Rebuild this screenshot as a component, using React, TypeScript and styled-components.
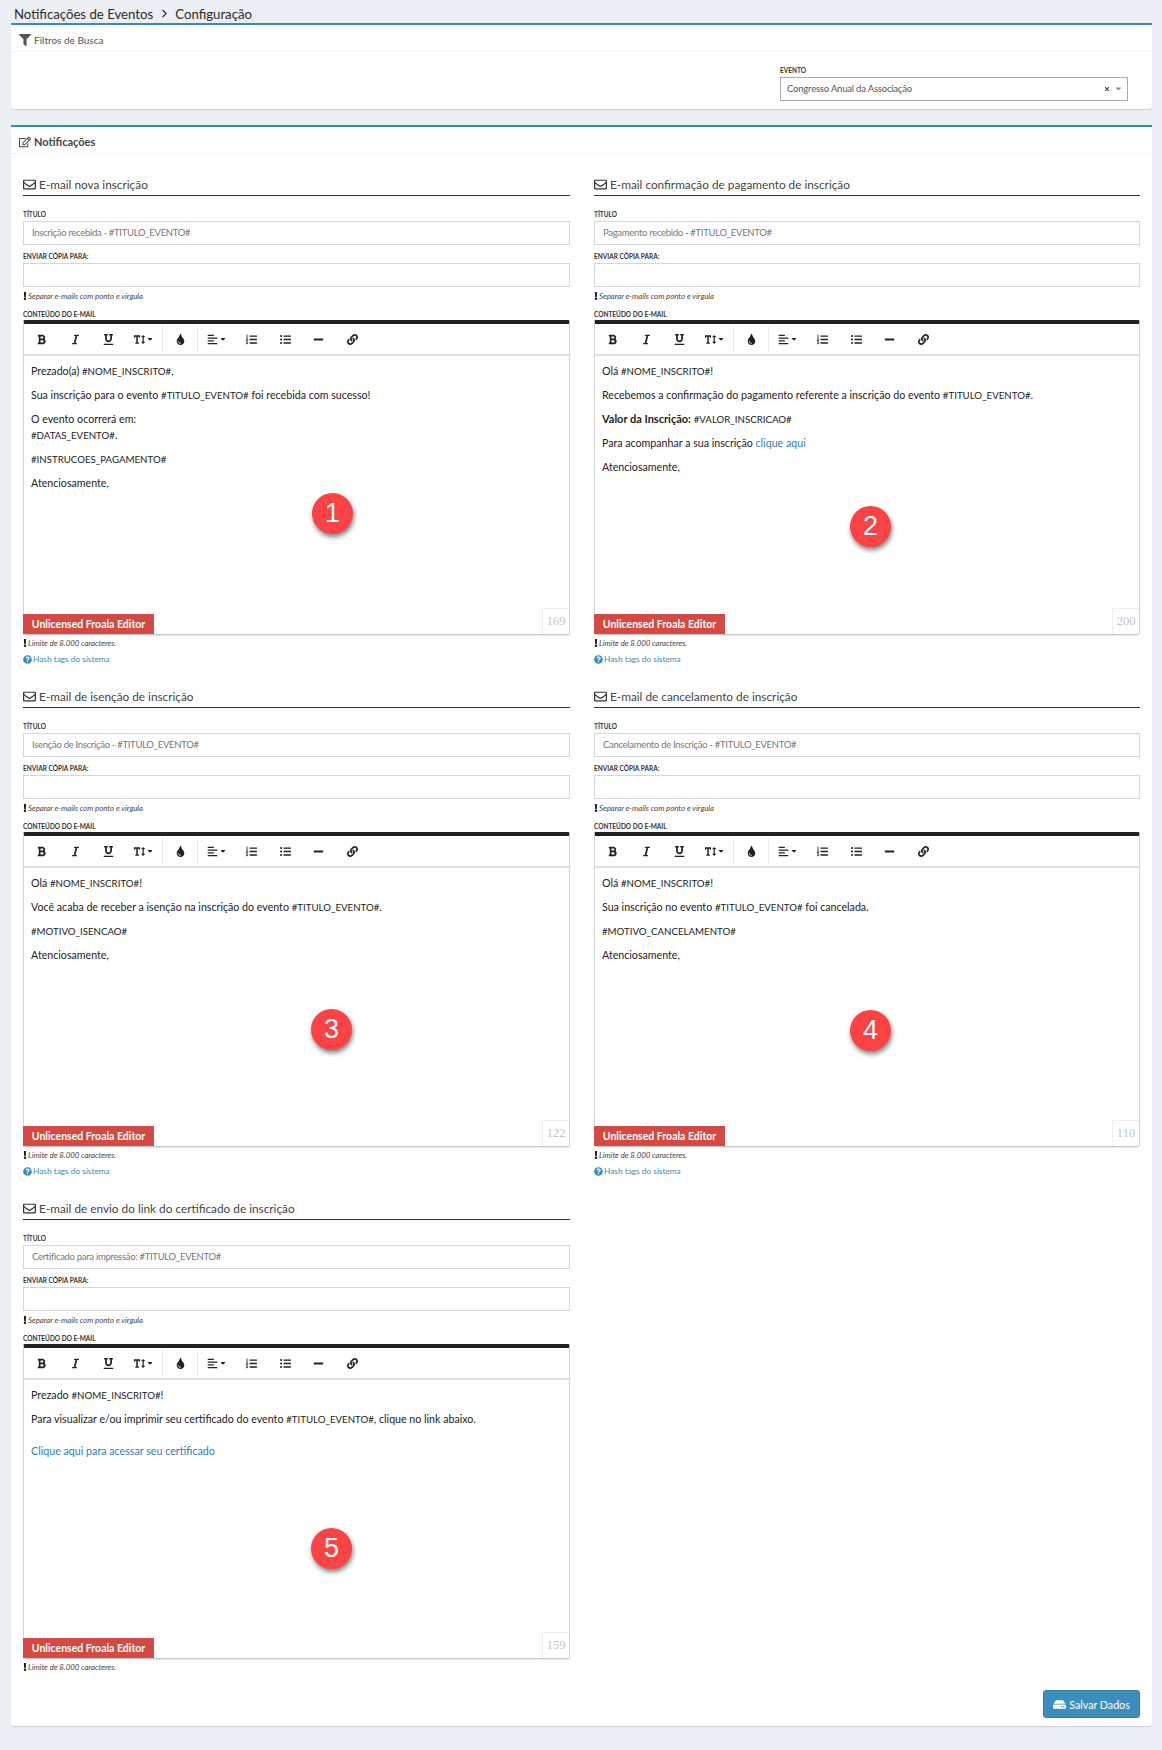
import React from 'react';
import styled, { createGlobalStyle } from 'styled-components';
import { ChevronRight } from 'lucide-react';
import {
  FaAlignLeft,
  FaBold,
  FaExclamation,
  FaFilter,
  FaHdd,
  FaItalic,
  FaLink,
  FaListOl,
  FaListUl,
  FaMinus,
  FaQuestionCircle,
  FaRegEdit,
  FaRegEnvelope,
  FaTextHeight,
  FaTint,
  FaUnderline,
  FaCaretDown,
  FaTimes,
} from 'react-icons/fa';

const GlobalStyle = createGlobalStyle`
  html, body {
    margin: 0;
    padding: 0;
    background: #ebeef3;
    font-family: Lato, "Noto Sans", sans-serif;
    color: #333;
  }
  * { box-sizing: border-box; }
`;

const Page = styled.div`
  width: 1162px;
  height: 1750px;
  padding: 0 10px 0 11px;
  overflow: hidden;
`;

const Breadcrumb = styled.div`
  display: flex;
  align-items: center;
  height: 23px;
  padding: 4px 0 0 3px;
  font-size: 13.2px;
  color: #2b2b2b;
  svg { margin: 0 4px 0 5px; }
`;

const Panel = styled.section`
  background: #fff;
  border-top: 2px solid #3c89bb;
  border-radius: 0 0 3px 3px;
  box-shadow: 0 1px 1px rgba(0, 0, 0, 0.14);
  margin-bottom: 16px;
`;

const PanelHeader = styled.header<{ $bold?: boolean }>`
  display: flex;
  align-items: center;
  gap: 3px;
  height: 27px;
  padding: 3px 0 0 8px;
  border-bottom: 1px solid #f2f2f2;
  font-size: ${({ $bold }) => ($bold ? '11px' : '10px')};
  font-weight: ${({ $bold }) => ($bold ? 700 : 400)};
  color: ${({ $bold }) => ($bold ? '#444' : '#555')};
  svg { font-size: 12px; }
`;

const FilterBody = styled.div`
  display: flex;
  justify-content: flex-end;
  height: 57px;
  padding: 13px 24px 0 0;
`;

const SelectField = styled.div`
  width: 348px;
`;

const SelectBox = styled.div`
  display: flex;
  align-items: center;
  height: 24px;
  padding: 0 4px 1px 6px;
  margin-top: 2px;
  border: 1px solid #aaa;
  font-size: 9.5px;
  letter-spacing: -0.2px;
  color: #555;
  span { flex: 1; }
  svg { color: #888; }
`;

const ClearIcon = styled(FaTimes)`
  font-size: 6px;
  margin-right: 4px;
  && { color: #444; }
`;

const PanelBody = styled.div`
  padding: 21px 12px 8px;
`;

const Grid = styled.div`
  display: grid;
  grid-template-columns: 547px 546px;
  column-gap: 24px;
  row-gap: 21.2px;
`;

const Notice = styled.div`
  min-width: 0;
`;

const NoticeTitle = styled.h3`
  display: flex;
  align-items: center;
  gap: 3px;
  height: 21px;
  margin: 0 0 13px;
  border-bottom: 1px solid #333;
  font-size: 11.8px;
  font-weight: 400;
  color: #444;
  padding-bottom: 1px;
  svg { font-size: 13px; color: #333; }
`;

const Field = styled.div`
  margin-bottom: 6px;
`;

const Label = styled.label`
  display: block;
  height: 10px;
  font-size: 6.5px;
  line-height: 12px;
  font-weight: 700;
  color: #333;
  text-transform: uppercase;
`;

const TextInput = styled.input`
  display: block;
  width: 100%;
  height: 24px;
  padding: 0 8px 2px;
  margin-top: 2px;
  border: 1px solid #d2d6de;
  outline: none;
  font: 9.5px Lato, "Noto Sans", sans-serif;
  letter-spacing: -0.3px;
  color: #777;
`;

const Hint = styled.div`
  display: flex;
  align-items: center;
  height: 12px;
  margin-top: 3px;
  font-size: 7.8px;
  font-style: italic;
  color: #444;
  svg { font-size: 8px; width: 4px; color: #222; margin-right: 1px; }
`;

const ContentLabel = styled(Label)`
  margin-top: 7px;
  margin-bottom: 1px;
`;

const Editor = styled.div`
  position: relative;
  height: 314px;
  border-top: 4px solid #222;
  border-left: 1px solid #d4d4d4;
  border-right: 1px solid #d4d4d4;
  border-radius: 2px 2px 0 0;
  box-shadow: 0 2px 2px -1px rgba(0, 0, 0, 0.3);
  display: flex;
  flex-direction: column;
`;

const Toolbar = styled.div`
  display: flex;
  align-items: center;
  flex: 0 0 32px;
  padding-left: 1px;
  border-bottom: 2px solid #e2e2e2;
`;

const ToolButton = styled.span<{ $wide?: boolean }>`
  display: flex;
  align-items: center;
  justify-content: center;
  width: ${({ $wide }) => ($wide ? '36px' : '33.5px')};
  height: 100%;
  font-size: 11px;
  color: #222;
`;

const Caret = styled(FaCaretDown)`
  font-size: 8px;
  margin-left: 1px;
`;

const ToolSeparator = styled.span`
  width: 1px;
  height: 26px;
  background: #ebebeb;
  margin-right: 1px;
`;

const Content = styled.div`
  flex: 1;
  padding: 7px 7px 0;
  font-size: 10.65px;
  line-height: 15.5px;
  color: #222;
  p { margin: 0 0 8.5px; }
  a { color: #337ab7; text-decoration: none; font-size: 10.7px; line-height: 0; }
  strong { font-weight: 700; font-size: 11px; line-height: 0; }
`;

const HashTag = styled.span`
  font-size: 9.7px;
  line-height: 0;
`;

const LinkParagraph = styled.p`
  && { margin-top: 16.5px; }
`;

const LicenseTag = styled.div`
  position: absolute;
  left: -1px;
  bottom: 0;
  width: 131px;
  height: 20px;
  background: #d24a43;
  color: #fff;
  font-size: 10.5px;
  font-weight: 700;
  line-height: 20px;
  text-align: center;
`;

const Counter = styled.div`
  position: absolute;
  right: 0;
  bottom: 0;
  width: 27px;
  height: 26px;
  padding-top: 5px;
  border-left: 1px solid #eee;
  border-top: 1px solid #eee;
  font: 12.5px "Liberation Serif", serif;
  color: #c4c4c4;
  text-align: center;
`;

const Marker = styled.div<{ $x: number; $y: number }>`
  position: absolute;
  left: ${({ $x }) => $x}px;
  top: ${({ $y }) => $y}px;
  width: 41px;
  height: 41px;
  border-radius: 50%;
  background: #fb4245;
  box-shadow: 1px 3px 5px rgba(0, 0, 0, 0.5);
  color: #fff;
  font: 27px/41px "Liberation Sans", sans-serif;
  text-align: center;
`;

const HashLink = styled.a`
  display: flex;
  align-items: center;
  gap: 1px;
  height: 14px;
  margin-top: 3px;
  font-size: 8.3px;
  color: #3c89bb;
  svg { font-size: 9px; }
`;

const Footer = styled.div`
  display: flex;
  justify-content: flex-end;
  margin-top: 17px;
`;

const SaveButton = styled.button`
  display: flex;
  align-items: center;
  justify-content: center;
  gap: 3px;
  width: 97px;
  height: 28px;
  padding: 0;
  background: #3c8dbc;
  border: 1px solid #367fa9;
  border-radius: 3px;
  color: #fff;
  font: 10.7px Lato, "Noto Sans", sans-serif;
  svg { font-size: 13px; }
`;

const tagged = (text: string) =>
  text.split(/(#[A-Z_]+#)/).map((part, i) =>
    part.startsWith('#') ? <HashTag key={i}>{part}</HashTag> : part,
  );

interface NoticeData {
  title: string;
  subject: string;
  body: React.ReactNode;
  count: number;
  marker: number;
  markerX: number;
  markerY: number;
  hashLink?: boolean;
}

const notices: NoticeData[] = [
  {
    title: 'E-mail nova inscrição',
    subject: 'Inscrição recebida - #TITULO_EVENTO#',
    count: 169,
    marker: 1,
    markerX: 288,
    markerY: 169,
    hashLink: true,
    body: (
      <>
        <p>{tagged('Prezado(a) #NOME_INSCRITO#,')}</p>
        <p>{tagged('Sua inscrição para o evento #TITULO_EVENTO# foi recebida com sucesso!')}</p>
        <p>O evento ocorrerá em:<br />{tagged('#DATAS_EVENTO#.')}</p>
        <p>{tagged('#INSTRUCOES_PAGAMENTO#')}</p>
        <p>Atenciosamente,</p>
      </>
    ),
  },
  {
    title: 'E-mail confirmação de pagamento de inscrição',
    subject: 'Pagamento recebido - #TITULO_EVENTO#',
    count: 200,
    marker: 2,
    markerX: 255,
    markerY: 182,
    hashLink: true,
    body: (
      <>
        <p>{tagged('Olá #NOME_INSCRITO#!')}</p>
        <p>{tagged('Recebemos a confirmação do pagamento referente a inscrição do evento #TITULO_EVENTO#.')}</p>
        <p><strong>Valor da Inscrição:</strong> {tagged('#VALOR_INSCRICAO#')}</p>
        <p>Para acompanhar a sua inscrição <a href="#">clique aqui</a></p>
        <p>Atenciosamente,</p>
      </>
    ),
  },
  {
    title: 'E-mail de isenção de inscrição',
    subject: 'Isenção de Inscrição - #TITULO_EVENTO#',
    count: 122,
    marker: 3,
    markerX: 287,
    markerY: 173,
    hashLink: true,
    body: (
      <>
        <p>{tagged('Olá #NOME_INSCRITO#!')}</p>
        <p>{tagged('Você acaba de receber a isenção na inscrição do evento #TITULO_EVENTO#.')}</p>
        <p>{tagged('#MOTIVO_ISENCAO#')}</p>
        <p>Atenciosamente,</p>
      </>
    ),
  },
  {
    title: 'E-mail de cancelamento de inscrição',
    subject: 'Cancelamento de Inscrição - #TITULO_EVENTO#',
    count: 110,
    marker: 4,
    markerX: 255,
    markerY: 174,
    hashLink: true,
    body: (
      <>
        <p>{tagged('Olá #NOME_INSCRITO#!')}</p>
        <p>{tagged('Sua inscrição no evento #TITULO_EVENTO# foi cancelada.')}</p>
        <p>{tagged('#MOTIVO_CANCELAMENTO#')}</p>
        <p>Atenciosamente,</p>
      </>
    ),
  },
  {
    title: 'E-mail de envio do link do certificado de inscrição',
    subject: 'Certificado para impressão: #TITULO_EVENTO#',
    count: 159,
    marker: 5,
    markerX: 287,
    markerY: 180,
    body: (
      <>
        <p>{tagged('Prezado #NOME_INSCRITO#!')}</p>
        <p>{tagged('Para visualizar e/ou imprimir seu certificado do evento #TITULO_EVENTO#, clique no link abaixo.')}</p>
        <LinkParagraph><a href="#">Clique aqui para acessar seu certificado</a></LinkParagraph>
      </>
    ),
  },
];

const EditorToolbar = () => (
  <Toolbar>
    <ToolButton><FaBold /></ToolButton>
    <ToolButton><FaItalic /></ToolButton>
    <ToolButton><FaUnderline /></ToolButton>
    <ToolButton $wide><FaTextHeight /><Caret /></ToolButton>
    <ToolSeparator />
    <ToolButton><FaTint /></ToolButton>
    <ToolSeparator />
    <ToolButton $wide><FaAlignLeft /><Caret /></ToolButton>
    <ToolButton><FaListOl /></ToolButton>
    <ToolButton><FaListUl /></ToolButton>
    <ToolButton><FaMinus /></ToolButton>
    <ToolButton><FaLink /></ToolButton>
  </Toolbar>
);

const NoticeForm = ({ notice }: { notice: NoticeData }) => (
  <Notice>
    <NoticeTitle><FaRegEnvelope />{notice.title}</NoticeTitle>
    <Field>
      <Label>Título</Label>
      <TextInput readOnly value={notice.subject} />
    </Field>
    <Field>
      <Label>Enviar cópia para:</Label>
      <TextInput readOnly value="" />
      <Hint><FaExclamation />Separar e-mails com ponto e vírgula</Hint>
    </Field>
    <ContentLabel>Conteúdo do e-mail</ContentLabel>
    <Editor>
      <EditorToolbar />
      <Content>{notice.body}</Content>
      <LicenseTag>Unlicensed Froala Editor</LicenseTag>
      <Counter>{notice.count}</Counter>
      <Marker $x={notice.markerX} $y={notice.markerY}>{notice.marker}</Marker>
    </Editor>
    <Hint><FaExclamation />Limite de 8.000 caracteres.</Hint>
    {notice.hashLink && <HashLink><FaQuestionCircle />Hash tags do sistema</HashLink>}
  </Notice>
);

export default function App() {
  return (
    <Page>
      <GlobalStyle />
      <Breadcrumb>Notificações de Eventos<ChevronRight size={13} strokeWidth={2} />Configuração</Breadcrumb>
      <Panel>
        <PanelHeader><FaFilter />Filtros de Busca</PanelHeader>
        <FilterBody>
          <SelectField>
            <Label>Evento</Label>
            <SelectBox>
              <span>Congresso Anual da Associação</span>
              <ClearIcon />
              <FaCaretDown size={9} />
            </SelectBox>
          </SelectField>
        </FilterBody>
      </Panel>
      <Panel>
        <PanelHeader $bold><FaRegEdit />Notificações</PanelHeader>
        <PanelBody>
          <Grid>
            {notices.map((notice) => (
              <NoticeForm key={notice.marker} notice={notice} />
            ))}
          </Grid>
          <Footer>
            <SaveButton><FaHdd />Salvar Dados</SaveButton>
          </Footer>
        </PanelBody>
      </Panel>
    </Page>
  );
}
